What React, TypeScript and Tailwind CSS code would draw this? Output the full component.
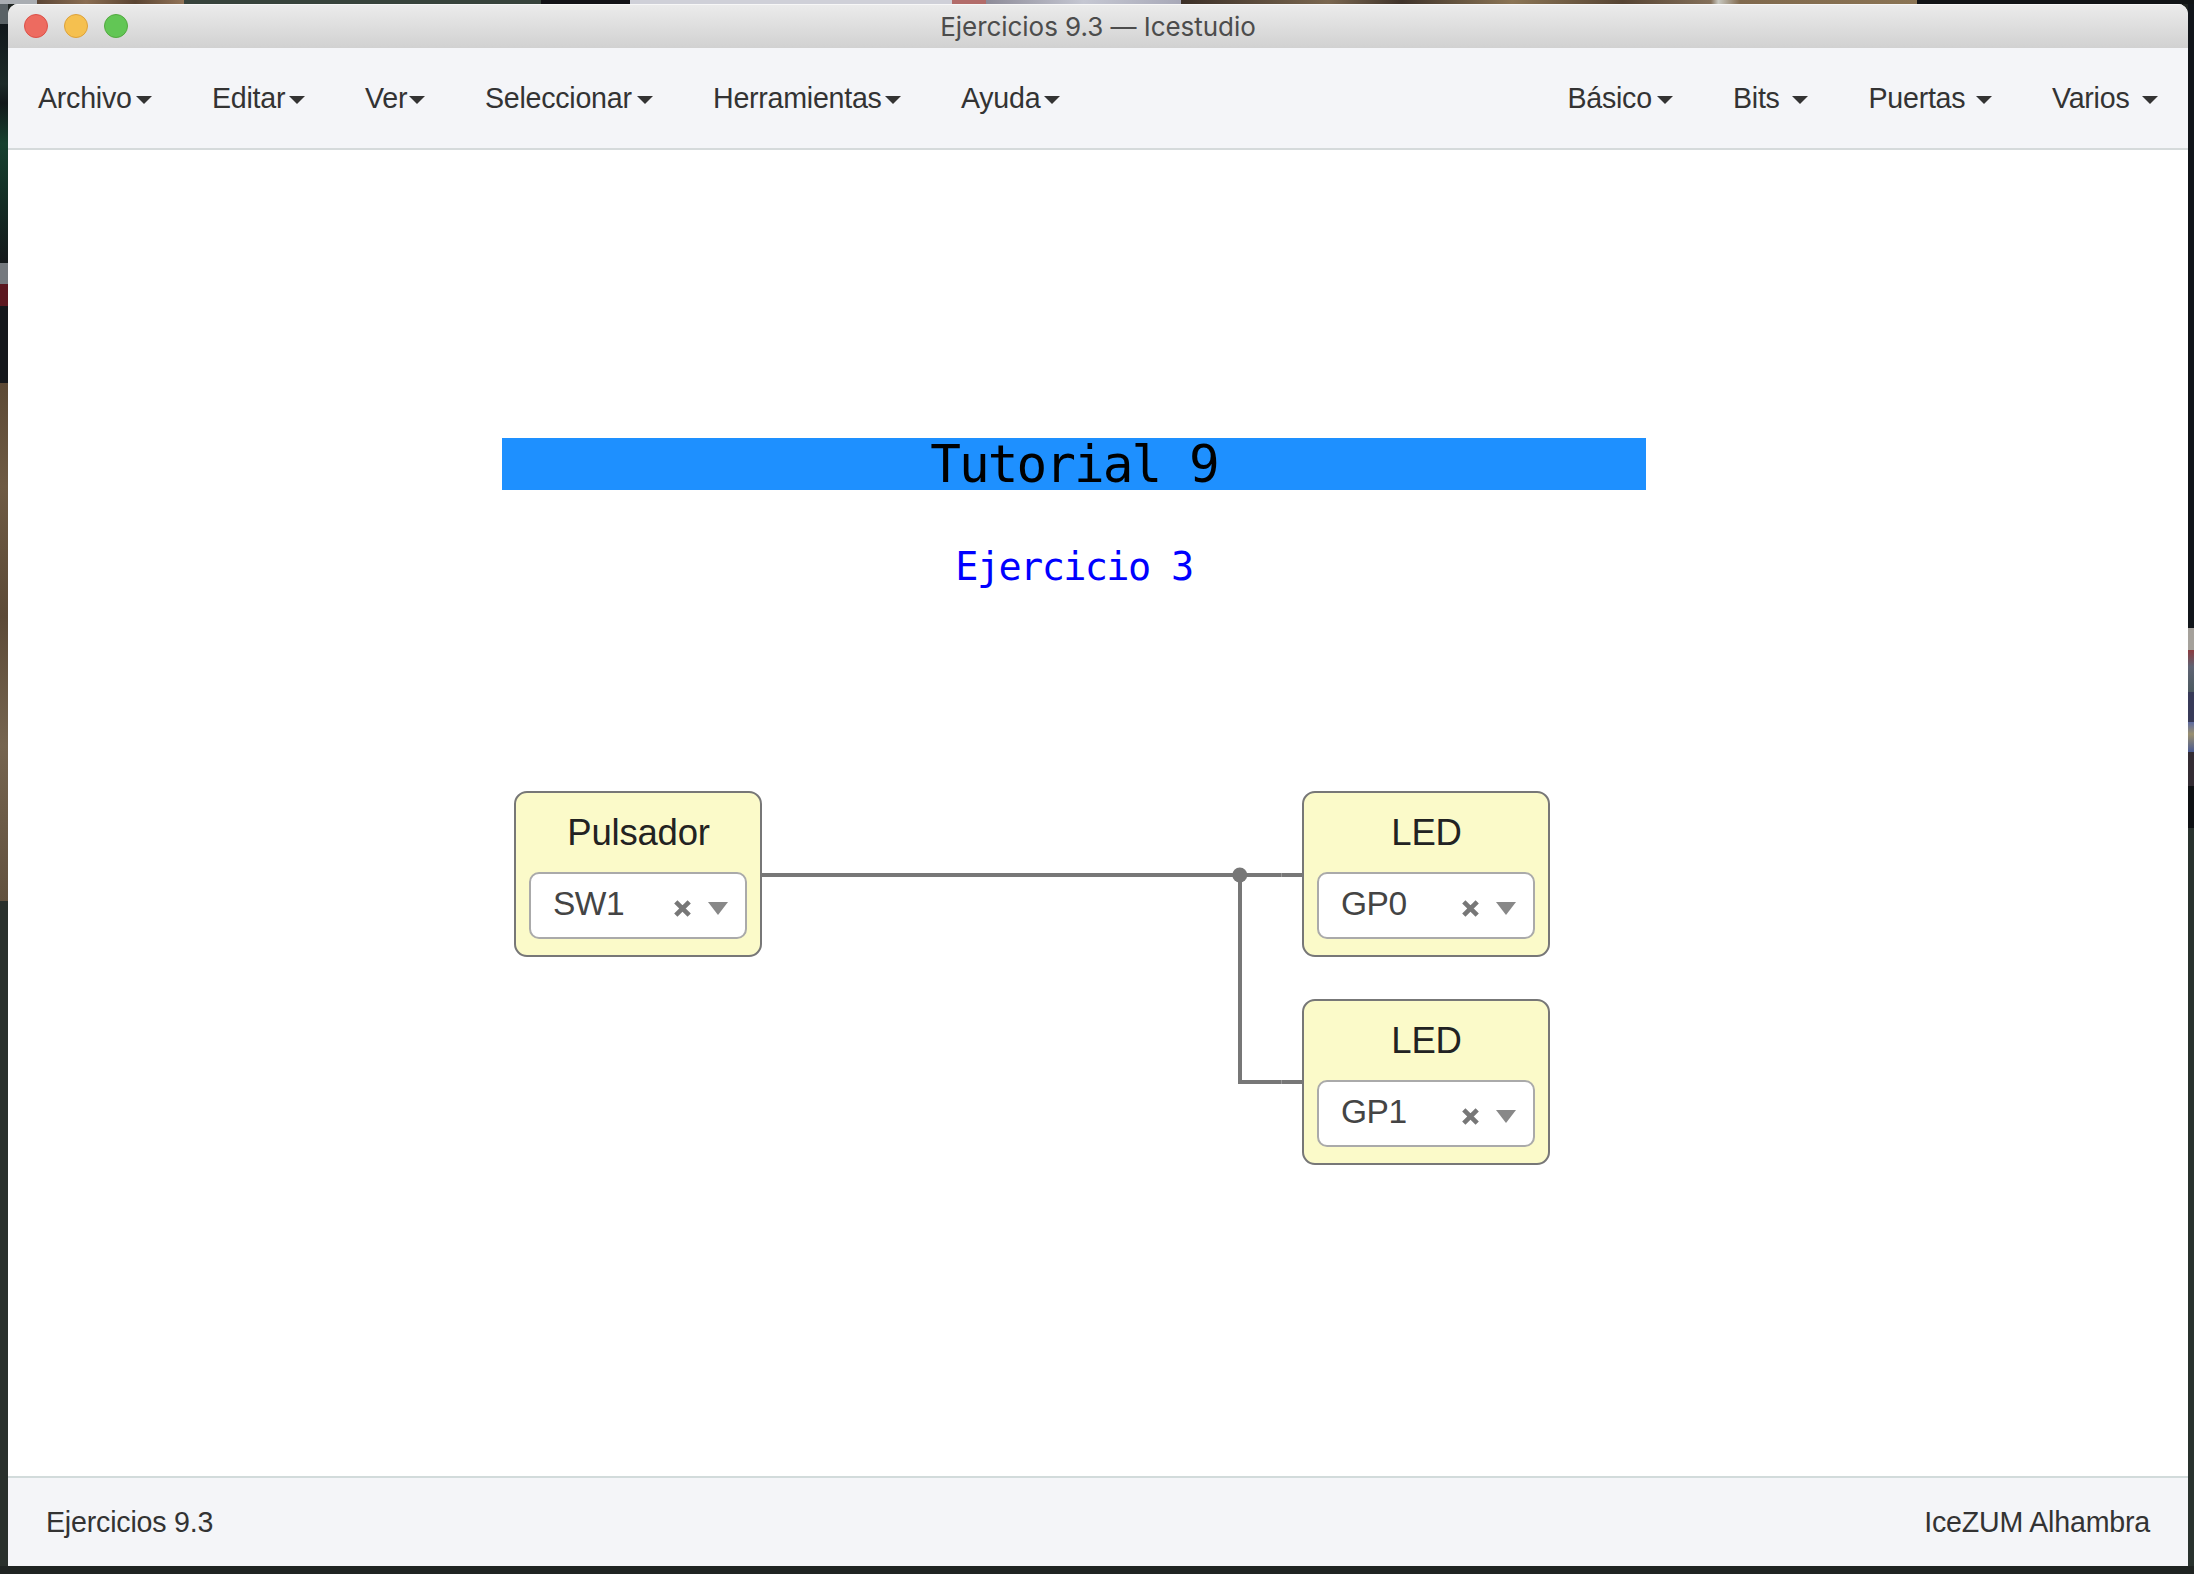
type MenuItem = { label: string; width: string };

const leftMenus: MenuItem[] = [
  { label: "Archivo", width: "w-[114px]" },
  { label: "Editar", width: "w-[93px]" },
  { label: "Ver", width: "w-[60px]" },
  { label: "Seleccionar", width: "w-[168px]" },
  { label: "Herramientas", width: "w-[188px]" },
  { label: "Ayuda", width: "w-[99px]" },
];

const rightMenus: MenuItem[] = [
  { label: "Básico", width: "w-[105px]" },
  { label: "Bits", width: "w-[75px]" },
  { label: "Puertas", width: "w-[123px]" },
  { label: "Varios", width: "w-[106px]" },
];

function Menu({ items, gap }: { items: MenuItem[]; gap: string }) {
  return (
    <ul className={`flex items-center ${gap}`}>
      {items.map((item) => (
        <li key={item.label} className={`flex items-center justify-between whitespace-nowrap ${item.width}`}>
          <span>{item.label}</span>
          <svg width="16" height="8" viewBox="0 0 16 8" className="mt-[4px] shrink-0 fill-[#333]">
            <path d="M0 0h16L8 8z" />
          </svg>
        </li>
      ))}
    </ul>
  );
}

function IoBlock({ title, pin, place }: { title: string; pin: string; place: string }) {
  return (
    <div
      className={`absolute flex h-[166px] w-[248px] flex-col items-center rounded-[13px] border-[2.5px] border-[#777] bg-[#fbfac9] ${place}`}
    >
      <div className="mt-[19px] h-[60px] pl-px text-[36.5px] leading-[42px] tracking-[-0.2px] text-[#222]">{title}</div>
      <div className="flex h-[67px] w-[218px] items-center rounded-[10px] border-2 border-[#aaa] bg-white pr-[17px] pl-[22px]">
        <span className="-mt-[4px] grow text-[33.5px] leading-[40px] tracking-[-0.5px] text-[#444]">{pin}</span>
        <svg width="17" height="17" viewBox="0 0 17 17" className="mt-[5px]" stroke="#777" strokeWidth="4.6">
          <path d="M1.8 1.8l13.4 13.4M15.2 1.8L1.8 15.2" />
        </svg>
        <svg width="20" height="13" viewBox="0 0 20 13" className="mt-[5px] ml-[17px] fill-[#888]">
          <path d="M0 0h20L10 13z" />
        </svg>
      </div>
    </div>
  );
}

export default function App() {
  return (
    <div className="flex h-[1574px] w-[2194px] flex-col overflow-hidden bg-[#1f2422] font-['Liberation_Sans',Arial,sans-serif]">
      <div className="flex h-1 shrink-0">
        <div className="w-[37px] bg-[#a9adb2]" />
        <div className="w-[147px] bg-[linear-gradient(90deg,#5b4636,#8a6d52,#5a4432,#927458)]" />
        <div className="w-[357px] bg-[#37433c]" />
        <div className="w-[89px] bg-[#111116]" />
        <div className="w-[322px] bg-[#cfd0d8]" />
        <div className="w-[34px] bg-[#b26c6a]" />
        <div className="w-[195px] bg-[linear-gradient(90deg,#8d8b98,#c5c7d2,#a8a9b8)]" />
        <div className="w-[736px] bg-[linear-gradient(90deg,#3b2f27,#7a6750_20%,#3f332a_30%,#8b7555_45%,#564433_60%,#84705a_72%,#c8c8c0_73%,#80694d_76%,#8a7454)]" />
        <div className="grow bg-[#111416]" />
      </div>

      <div className="flex min-h-0 grow">
        <div className="flex w-2 shrink-0 flex-col">
          <div className="h-[20px] bg-[#5a6266]" />
          <div className="h-[239px] bg-[linear-gradient(180deg,#10161a,#1c2a29_25%,#12181b_33%,#17402f_50%,#142d25_75%,#15191b)]" />
          <div className="h-[21px] bg-[#75797e]" />
          <div className="h-[22px] bg-[#5c1820]" />
          <div className="h-[77px] bg-[#15171b]" />
          <div className="h-[518px] bg-[linear-gradient(180deg,#5c4935,#6e5a43_20%,#5c4a37_45%,#75644f_70%,#62513e)]" />
          <div className="grow bg-[#29302c]" />
        </div>

        <div className="flex grow flex-col overflow-hidden rounded-t-[10px] bg-white">
          <header className="grid h-11 shrink-0 grid-cols-[1fr_auto_1fr] items-center bg-linear-to-b from-[#ececec] to-[#d1d1d1] shadow-[inset_0_1px_0_#f7f7f7]">
            <div className="flex gap-4 pl-4">
              <i className="size-6 rounded-full border border-[#db5048] bg-[#ed6b60]" />
              <i className="size-6 rounded-full border border-[#dca13a] bg-[#f5c04f]" />
              <i className="size-6 rounded-full border border-[#52a93f] bg-[#62c655]" />
            </div>
            <h1 className="pt-0.5 font-[Inter,sans-serif] text-[26px] leading-[42px] tracking-[-0.05px] whitespace-nowrap text-[#4c4c4c]">
              Ejercicios 9.3 — Icestudio
            </h1>
          </header>

          <nav className="flex h-[102px] shrink-0 items-center justify-between border-b-2 border-[#d5dadb] bg-[#f4f5f8] pr-[30px] pb-px pl-[30px] text-[28.6px] leading-[40px] tracking-[-0.25px] text-[#333]">
            <Menu items={leftMenus} gap="gap-[60px]" />
            <Menu items={rightMenus} gap="gap-[60.5px]" />
          </nav>

          <main className="relative min-h-0 grow">
            <div className="absolute top-[288px] left-[494px] flex h-[52px] w-[1144px] items-center justify-center bg-[#1e90ff] font-['DejaVu_Sans_Mono',monospace] text-[51px] leading-[52px] tracking-[-1.95px] text-black">
              <p className="pt-px">Tutorial 9</p>
            </div>
            <div className="absolute top-[391px] left-[494px] flex w-[1144px] justify-center font-['DejaVu_Sans_Mono',monospace] text-[38.5px] leading-[52px] tracking-[-1.6px] text-[#0000ff]">
              <p>Ejercicio 3</p>
            </div>

            <svg className="absolute top-0 left-0" width="2180" height="1326" viewBox="8 150 2180 1326" fill="none" stroke="#777" strokeWidth="4">
              <path d="M760 875H1304M1240 875V1082H1304" />
              <path d="M1281.5 873v4M1281.5 1080v4" stroke="#999" strokeWidth="1" />
              <circle cx="1239.8" cy="875" r="7.5" fill="#777" stroke="none" />
            </svg>

            <IoBlock title="Pulsador" pin="SW1" place="top-[641px] left-[506px]" />
            <IoBlock title="LED" pin="GP0" place="top-[641px] left-[1294px]" />
            <IoBlock title="LED" pin="GP1" place="top-[849px] left-[1294px]" />
          </main>

          <footer className="flex h-[90px] shrink-0 items-center justify-between border-t-2 border-[#d2dbdb] bg-[#f4f5f8] px-[38px] pb-px text-[28.6px] leading-[40px] tracking-[-0.2px] text-[#333]">
            <div>Ejercicios 9.3</div>
            <div>IceZUM Alhambra</div>
          </footer>
        </div>

        <div className="flex w-1.5 shrink-0 flex-col">
          <div className="h-[624px] bg-[#11151a]" />
          <div className="h-[22px] bg-[#a5a19b]" />
          <div className="h-[42px] bg-[linear-gradient(180deg,#8b3c40,#5f6474_40%,#4c5a60)]" />
          <div className="h-[30px] bg-[#373a58]" />
          <div className="h-[30px] bg-[linear-gradient(180deg,#5d6aa0,#9a9070_40%,#4b5a90)]" />
          <div className="h-[34px] bg-[#332c33]" />
          <div className="h-[42px] bg-[#0e1114]" />
          <div className="grow bg-[#29322e]" />
        </div>
      </div>

      <div className="h-2 shrink-0 bg-[#1f2422]" />
    </div>
  );
}
